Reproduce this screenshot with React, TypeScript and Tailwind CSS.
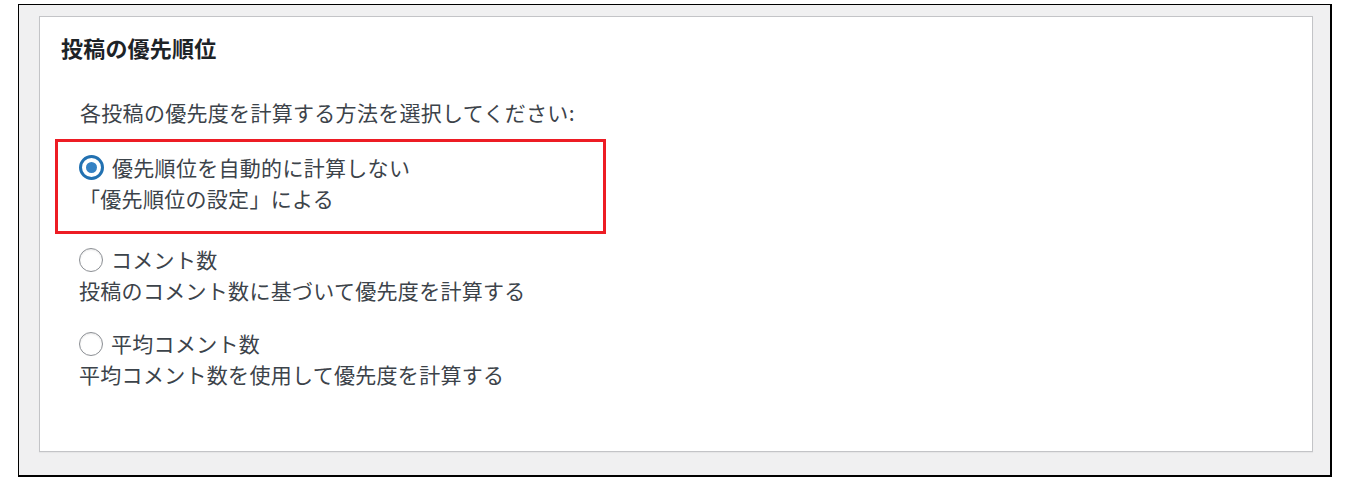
const font = { fontFamily: '"Noto Sans CJK JP", "Noto Sans", sans-serif' };

const Radio = ({ checked }: { checked?: boolean }) =>
  checked ? (
    <span className="flex h-[25px] w-[25px] shrink-0 items-center justify-center rounded-full border-[3px] border-[#2271b1] bg-white">
      <span className="h-[11px] w-[11px] rounded-full bg-[#3582c4]" />
    </span>
  ) : (
    <span className="h-[24px] w-[24px] shrink-0 rounded-full border-[1.5px] border-[#8c8f94] bg-white shadow-[inset_0_1px_2px_rgba(0,0,0,0.1)]" />
  );

const Option = ({
  label,
  desc,
  checked,
}: {
  label: string;
  desc: string;
  checked?: boolean;
}) => (
  <div>
    <label className="flex items-center gap-[8px] leading-[31px]">
      <Radio checked={checked} />
      <span>{label}</span>
    </label>
    <div className="leading-[31px]">{desc}</div>
  </div>
);

export default function App() {
  return (
    <div className="min-h-screen bg-white pt-[4px]" style={font}>
      <div className="ml-[18px] w-[1314px] border border-b-2 border-r-2 border-black bg-[#f0f0f1] pb-[23px] pl-[20px] pr-[17px] pt-[11px]">
        <div className="border border-[#c3c4c7] bg-white pb-[61px] pt-[15px] shadow-[0_1px_1px_rgba(0,0,0,0.04)]">
          <h2 className="pl-[21px] text-[22px] font-bold leading-[30px] tracking-[0.2px] text-[#1d2327]">投稿の優先順位</h2>
          <div className="pl-[15px] text-[21px] tracking-[0.3px] text-[#3c434a]">
            <p className="ml-[25px] mt-[35px] leading-[31px]">
              各投稿の優先度を計算する方法を選択してください:
            </p>
            <div className="mt-[11px] w-[551px] border-[3px] border-[#ed1c24] pb-[17px] pl-[21px] pt-[10px]">
              <Option checked label="優先順位を自動的に計算しない" desc="「優先順位の設定」による" />
            </div>
            <div className="mt-[10px] pl-[24px]">
              <Option label="コメント数" desc="投稿のコメント数に基づいて優先度を計算する" />
            </div>
            <div className="mt-[22px] pl-[24px]">
              <Option label="平均コメント数" desc="平均コメント数を使用して優先度を計算する" />
            </div>
          </div>
        </div>
      </div>
    </div>
  );
}
